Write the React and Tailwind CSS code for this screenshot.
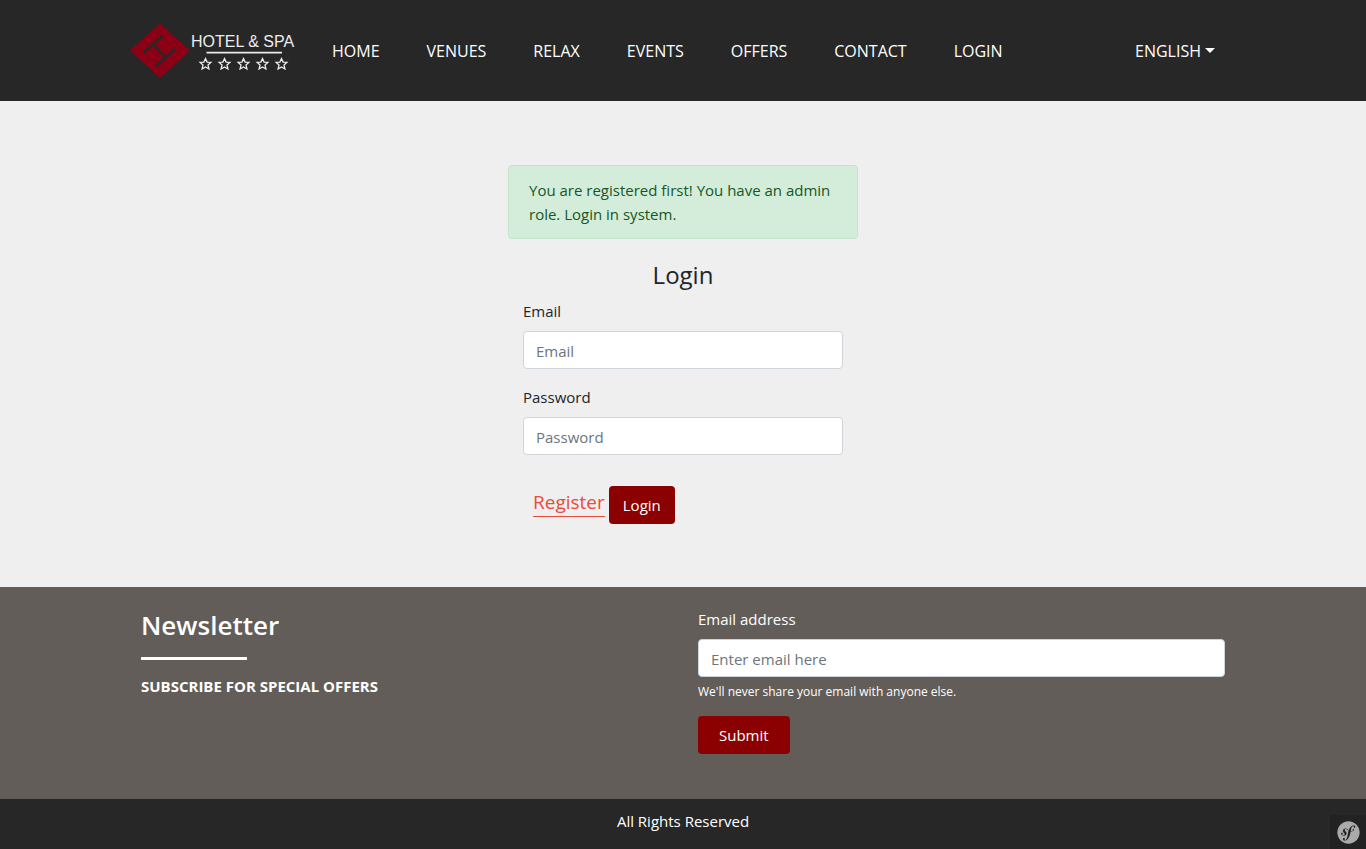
import React from "react";
import { FaSymfony } from "react-icons/fa";

const links = ["HOME", "VENUES", "RELAX", "EVENTS", "OFFERS", "CONTACT", "LOGIN"];
const stars = [75, 94, 113, 132, 151];
const star = "M0-5.5 1.6-1.9 5.4-1.6 2.5 1 3.4 5 0 2.9-3.4 5-2.5 1-5.4-1.6-1.6-1.9Z";
const field =
  "block h-[38px] w-full rounded border border-[#ced4da] bg-white px-3 pt-1 pb-0.5 text-[15px] leading-6 text-[#495057] placeholder:text-[#6c757d] outline-none focus:border-[#80bdff]";

function Logo() {
  return (
    <svg width="166" height="61" viewBox="0 0 166 61" role="img" aria-label="Hotel & Spa">
      <path d="M0 30.5 30 3.5 60 30.5 30 58Z" fill="#8b0014" />
      <path d="M13.3 32.7 32.7 16M26 46.3 45 29M23 24.4 35.5 37.6" fill="none" stroke="#272727" strokeWidth="2.7" />
      <text x="61" y="27" fill="#ececec" fontSize="16" fontFamily="'Liberation Sans', Arial, sans-serif">
        HOTEL &amp; SPA
      </text>
      <path d="M76.5 32.7H152" stroke="#ececec" strokeWidth="1.7" />
      {stars.map((x) => (
        <path key={x} d={star} transform={`translate(${x + 0.5} 44)`} fill="none" stroke="#ececec" strokeWidth="1.3" />
      ))}
    </svg>
  );
}

export default function App() {
  return (
    <div className="flex min-h-screen flex-col bg-[#efefef] font-['Open_Sans','Noto_Sans',sans-serif] text-[15px] leading-6 text-[#212529]">
      <header className="bg-[#272727] text-base leading-6 text-white">
        <div className="mx-auto flex max-w-[1140px] items-center py-5 pr-[38px] pl-[17px]">
          <a href="#home" className="shrink-0">
            <Logo />
          </a>
          <nav className="ml-9 flex flex-wrap items-center gap-x-[47px]">
            {links.map((l) => (
              <a key={l} href={"#" + l.toLowerCase()}>
                {l}
              </a>
            ))}
          </nav>
          <button type="button" className="ml-auto flex items-center gap-1">
            ENGLISH
            <svg width="10" height="5" viewBox="0 0 10 5" aria-hidden="true">
              <path d="M0 0H10L5 5Z" fill="currentColor" />
            </svg>
          </button>
        </div>
      </header>

      <main className="grow px-4 pt-16 pb-[63px]">
        <div className="mx-auto max-w-[350px]">
          <div role="alert" className="rounded border border-[#c3e6cb] bg-[#d4edda] px-5 py-3 text-[#155724]">
            You are registered first! You have an admin role. Login in system.
          </div>
          <form className="px-[15px] pt-5" onSubmit={(e) => e.preventDefault()}>
            <h1 className="text-center text-2xl leading-8">Login</h1>
            <label htmlFor="email" className="mt-2 mb-2 block">
              Email
            </label>
            <input id="email" type="email" placeholder="Email" className={field} />
            <label htmlFor="password" className="mt-4 mb-2 block">
              Password
            </label>
            <input id="password" type="password" placeholder="Password" className={field} />
            <div className="mt-[31px] flex items-start gap-1 pl-[10px]">
              <a href="#register" className="border-b border-[#e74c3c] pt-0.5 text-[19px] leading-7 text-[#e74c3c]">
                Register
              </a>
              <button type="submit" className="h-[38px] rounded bg-[#8b0000] px-[14px] text-white">
                Login
              </button>
            </div>
          </form>
        </div>
      </main>

      <section className="bg-[#625d58] text-white">
        <div className="mx-auto grid max-w-[1140px] gap-x-[30px] px-7 pt-5 pb-[45px] md:grid-cols-2">
          <div>
            <h2 className="text-[26px] font-semibold leading-9">Newsletter</h2>
            <div className="mt-[14px] h-[3px] w-[106px] bg-white" />
            <p className="mt-[14px] font-bold">SUBSCRIBE FOR SPECIAL OFFERS</p>
          </div>
          <form onSubmit={(e) => e.preventDefault()}>
            <label htmlFor="newsletter" className="mb-2 block">
              Email address
            </label>
            <input id="newsletter" type="email" placeholder="Enter email here" className={field} />
            <small className="mt-[5px] block text-xs leading-5">We'll never share your email with anyone else.</small>
            <button type="submit" className="mt-[14px] h-[38px] rounded bg-[#8b0000] px-[21px] text-white">
              Submit
            </button>
          </form>
        </div>
      </section>

      <footer className="relative bg-[#272727] pt-[10px] pb-4 text-center text-white">
        All Rights Reserved
        <button
          type="button"
          aria-label="Toolbar"
          className="absolute right-0 bottom-0 flex h-[34px] w-9 items-center justify-center rounded-tl bg-[#222222] text-[#aaaaaa]"
        >
          <FaSymfony size={23} aria-hidden="true" />
        </button>
      </footer>
    </div>
  );
}
